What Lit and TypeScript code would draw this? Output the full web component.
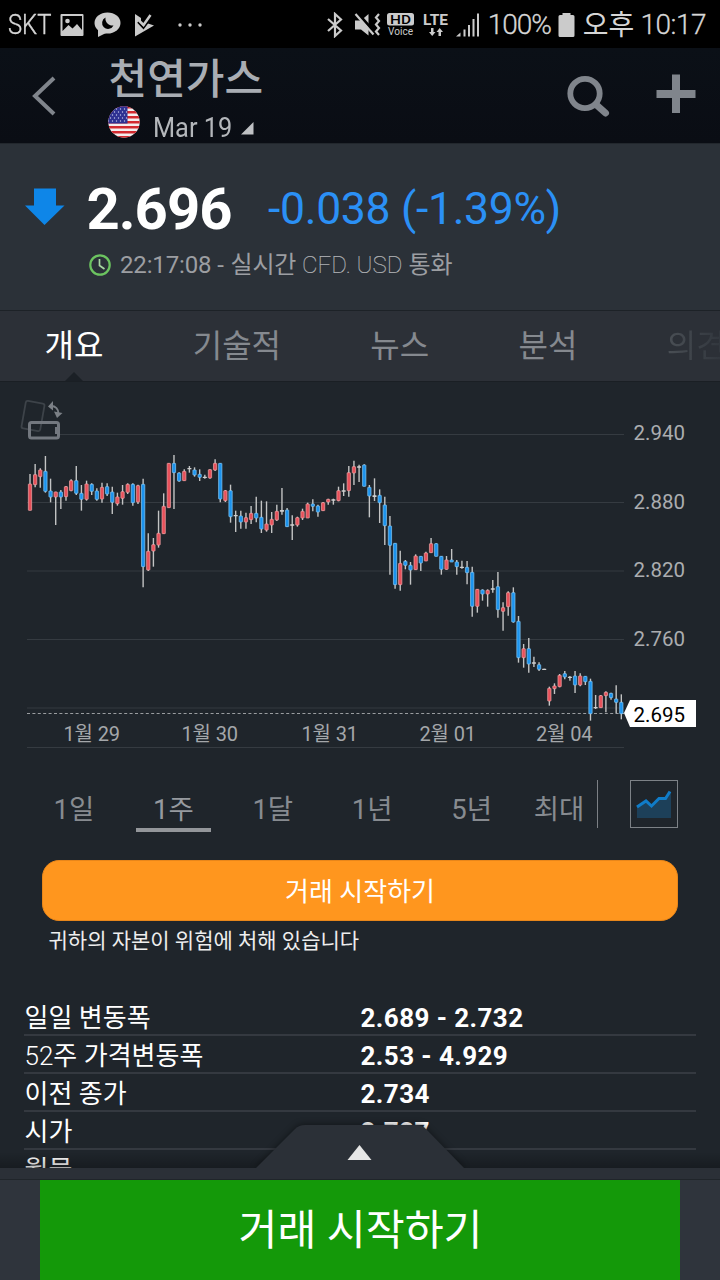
import { LitElement, html, svg, css } from "lit";
import { customElement } from "lit/decorators.js";

/* Candle: kind (r = up, b = down, d = doji), wick top, body top, body bottom, wick bottom.
   Values are thirds of a pixel, measured from the base of their segment. */
const SEGMENTS: { base: number; rows: string }[] = [
  {
    base: 8,
    rows: `r 252 282 361 361|r 222 254 284 292|r 235 240 260 293|b 198 244 304 308|b 266 303 321 337|r 305 306 321 405|b 300 306 321 357|r 288 290 320 332|r 268 272 302 304|b 228 272 310 315|b 285 310 328 362|r 272 282 328 332|b 280 283 304 315|b 295 303 328 332|r 278 292 327 338|b 280 290 312 318|b 290 306 337 372|r 308 321 341 347|r 285 305 325 344|r 280 283 307 312|b 280 283 338 347|r 284 287 336 342|b 266 283 530 592|r 430 484 540 543|r 444 464 483 530|r 362 430 465 473|r 310 349 431 431|r 220 220 353 353|b 195 220 248 357|b 247 249 273 275|r 238 244 272 272|d 228 234 238 248|b 232 240 255 260|b 238 253 262 273|d 254 260 264 266|r 238 239 264 266`,
  },
  {
    base: 58,
    rows: `r 58 70 90 93|b 70 70 177 187|r 150 152 182 186|b 134 152 230 248|d 212 225 228 276|b 212 228 246 266|r 218 233 246 266|r 198 220 239 252|b 170 220 234 247|b 182 232 267 279|r 184 252 270 275|r 216 238 255 279|r 194 214 240 243|d 144 210 215 224|b 204 210 260 260|d 226 253 257 300|r 230 233 255 260|r 206 214 234 240|r 188 192 234 234|b 178 192 199 214|b 194 198 216 230|r 186 188 212 212|r 176 178 186 194|d 176 178 181 194|r 140 152 182 184|d 130 151 154 168|r 78 98 152 170|r 62 80 99 135|d 74 79 82 126|b 73 75 139 139|b 135 142 168 232|d 115 166 171 183|b 148 166 188 249|b 170 195 257 315|b 228 258 316 404|b 310 310 434 446|r 332 370 434 452|b 360 364 376 388|b 366 376 390 434|r 343 348 389 389|b 348 349 369 393|r 335 339 363 363|r 294 311 338 338|b 310 311 349 349|b 348 349 388 404|r 348 360 388 389|b 327 360 366 366|b 360 366 380 404|d 362 380 384 386|b 363 382 398 433|b 380 397 499 530|r 447 448 499 518|b 448 450 462 482|r 448 451 462 500|d 420 445 449 458`,
  },
  {
    base: 148,
    rows: `b 126 170 239 263|r 217 233 244 302|r 184 188 230 257|b 172 188 276 278|b 258 274 383 398|r 342 356 383 413|b 324 356 402 428|d 380 397 401 411|b 397 404 418 423|d 416 416 419 419|r 470 475 513 527|r 460 468 476 492|r 432 436 470 472|b 423 431 441 448|d 438 440 444 452|b 423 438 465 489|r 430 438 465 469|b 438 439 455 465|b 446 454 551 572|d 495 531 535 537|r 495 497 533 533|r 484 487 497 547|b 488 490 503 509|b 466 507 517 550|b 493 517 551 568`,
  },
];

const CANDLES = SEGMENTS.flatMap(({ base, rows }) =>
  rows.split("|").map((row) => {
    const [kind, ...v] = row.split(" ");
    const [high, top, bottom, low] = v.map((n) => base + Number(n) / 3);
    return { kind, high, top, bottom, low };
  }),
);

const FIRST_X = 30;
const STEP = 5.142;

@customElement("price-chart")
export class PriceChart extends LitElement {
  static styles = css`
    :host { display: block; height: 374px; }
    svg { display: block; }
    .grid { stroke: #353b41; stroke-width: 1; }
    .last { stroke: #9a9da0; stroke-width: 1; stroke-dasharray: 3 2.4; }
    .wick { stroke: #c3c4c4; stroke-width: 1.4; }
    .r { fill: #e8505a; stroke: #f0a5a6; stroke-width: 0.7; }
    .b { fill: #1b93ee; stroke: #85c9f5; stroke-width: 0.7; }
    .d { fill: #cfcfcf; }
    .axis { fill: #abadb0; font: 20.5px Roboto, "Noto Sans CJK KR", sans-serif; }
    .day { fill: #a4a7aa; font: 20px Roboto, "Noto Sans CJK KR", sans-serif; }
    .tag { fill: #fff; }
    .tagtext { fill: #000; font: 20.5px Roboto, sans-serif; }
    .phone { fill: none; stroke: #73787f; stroke-width: 3; }
    .ghost { fill: none; stroke: #3d4349; stroke-width: 1.8; }
    .turn { fill: none; stroke: #7b8086; stroke-width: 2; }
    .tip { fill: #7b8086; }
  `;

  render() {
    return html`<svg width="720" height="374" viewBox="0 0 720 374">
      ${[52.5, 120.5, 189, 257.5, 326].map((y, i) => svg`
        <line class="grid" x1=${i === 0 ? 60 : 27} x2="624" y1=${y} y2=${y}></line>`)}
      <line class="grid" x1="27" x2="624" y1="365.5" y2="365.5"></line>
      <line class="last" x1="27" x2="624" y1="331.5" y2="331.5"></line>
      ${CANDLES.map((c, i) => {
        const x = FIRST_X + i * STEP;
        const w = c.kind === "d" ? 4.2 : 3.3;
        return svg`
          <line class="wick" x1=${x} x2=${x} y1=${c.high} y2=${c.low}></line>
          <rect class=${c.kind} x=${x - w / 2} y=${c.top} width=${w} rx="0.4"
            height=${Math.max(1.3, c.bottom - c.top)}></rect>`;
      })}
      ${["2.940", "2.880", "2.820", "2.760"].map((t, i) => svg`
        <text class="axis" x="633.5" y=${58.3 + i * 68.5}>${t}</text>`)}
      ${[["1월 29", 63.5], ["1월 30", 181.500], ["1월 31", 301.500], ["2월 01", 419.500], ["2월 04", 536]].map(
        ([t, x]) => svg`<text class="day" x=${x} y="358.6" textLength="56.500">${t}</text>`)}
      <path class="tag" d="M624 331 L630 318 H696 V345 H630 Z"></path>
      <text class="tagtext" x="633.500" y="339.6">2.695</text>
      <rect class="ghost" x="23.500" y="20" width="19" height="28" rx="2" transform="rotate(10 33 34)"></rect>
      <rect class="phone" x="29.5" y="40.5" width="29" height="15.5" rx="2"></rect>
      <path class="phone" d="M56.5 45v7"></path>
      <path class="turn" d="M51 24c4.500 0 7.500 3 7.500 8"></path>
      <path class="tip" d="M48 24.500l5-5.500v9.500zM54 29.500l8.500 1.500-5.500 5z"></path>
    </svg>`;
  }
}

@customElement("app-root")
export class AppRoot extends LitElement {
  static styles = css`
    :host {
      display: flex; flex-direction: column; position: relative;
      width: 720px; height: 1280px; overflow: hidden;
      background: #1f252b; color: #fff; white-space: nowrap;
      font-family: Roboto, "Noto Sans CJK KR", sans-serif;
    }
    svg { display: block; flex: none; }
    .status {
      flex: none; height: 48px; background: #000; color: #d6d6d6;
      display: flex; align-items: center; justify-content: space-between;
      padding: 2px 14px 0 8px; box-sizing: border-box;
      font-size: 28px; font-weight: 300; line-height: 46px;
    }
    .status .left, .status .right { display: flex; align-items: center; }
    .carrier { width: 52px; }
    .carrier span { display: inline-block; font-size: 28px; font-weight: 300; transform: scaleX(0.85); transform-origin: 0 50%; -webkit-text-stroke: 0.4px #d6d6d6; }
    .pct { width: 63px; margin-left: 8px; letter-spacing: -1px; -webkit-text-stroke: 0.3px #d6d6d6; }
    .clock { margin-left: 8px; letter-spacing: -0.5px; -webkit-text-stroke: 0.3px #d6d6d6; }
    .ampm { font-weight: 400; font-size: 28px; letter-spacing: 0; position: relative; top: 1px; -webkit-text-stroke: 0; }
    .header {
      flex: none; height: 96px; box-sizing: border-box; display: flex;
      background: linear-gradient(#0b1017, #0a0d14); border-bottom: 1px solid #22272d;
      color: #a9adb3;
    }
    .back { width: 108px; }
    .heading { flex: 1; }
    .title { font-size: 42px; font-weight: 500; line-height: 48px; padding: 8px 0 0 0.500px; height: 47px; }
    .contract { display: flex; align-items: center; height: 32px; margin-top: 3px; }
    .month { font-size: 28px; line-height: 32px; margin: 9px 0 0 13px; width: 79px; height: 30px; color: #b4b7bb; }
    .month span { display: inline-block; transform: scaleX(0.905); transform-origin: 0 50%; }
    .contract .corner { margin: 13px 0 0 9px; }
    .quote {
      flex: none; height: 167px; box-sizing: border-box; background: #2b3138;
      border-bottom: 1px solid #1d2227; padding: 32px 0 0 25px;
    }
    .figures { display: flex; height: 68px; }
    .figures .down { margin-top: 12px; }
    .price { font-size: 58px; font-weight: 700; line-height: 66px; width: 181.500px; margin-left: 21.500px; letter-spacing: -1px; }
    .change { font-size: 44.5px; line-height: 67px; color: #2b90f5; letter-spacing: -0.3px; }
    .stamp { display: flex; align-items: center; padding-left: 64px; margin-top: 5px; height: 32px;
      font-size: 24px; line-height: 32px; color: #9c9ea2; }
    .stamp .text { margin-left: 9px; height: 32px; }
    .stamp .time { letter-spacing: -0.15px; }
    .stamp .kr { margin-left: 1px; letter-spacing: -0.3px; }
    .lt { font-weight: 300; }
    .thin { font-weight: 100; color: #b0b2b5; -webkit-text-stroke: 0.2px #b0b2b5; }
    .tabs {
      flex: none; height: 71px; box-sizing: border-box; position: relative; display: flex; gap: 89.300px;
      padding-left: 44.500px; overflow: hidden; font-size: 32px; line-height: 71px;
      background: #2c3037; border-bottom: 1px solid #1a1f24; color: #85898f;
    }
    .tab { flex: none; }
    .active { color: #fff; }
    .far { color: transparent; background: linear-gradient(90deg, #4a4f55, #32373e 52px); -webkit-background-clip: text; background-clip: text; }
    .notch { position: absolute; left: 65px; bottom: 0; }
    .periods { flex: none; display: flex; height: 52px; margin-top: 24px; padding-left: 36.500px; }
    .period {
      width: 75px; margin-right: 24.4px; text-align: center; box-sizing: border-box;
      height: 52px; font-size: 27.5px; line-height: 60px; color: #878b90;
    }
    .period.on { border-bottom: 4px solid #93969a; color: #969a9f; }
    .period.near { margin-right: 12.500px; }
    .period.max { margin-right: 0; border: none; }
    .rule { width: 1px; height: 48px; background: #7c8085; margin: 0 32px 0 0; }
    .cta {
      flex: none; margin: 28px 42px 0; height: 61px; border-radius: 17px; box-sizing: border-box;
      background: #ff961e; border: 1px solid #e8861a; text-align: center; font-size: 26px; line-height: 63px;
    }
    .risk { flex: none; margin: 4px 0 0 48.500px; height: 32px; font-size: 21px; line-height: 32px; color: #eee; }
    .stats { margin: 41px 24px 0; }
    .stat {
      display: grid; grid-template-columns: 336px 1fr; height: 38px; box-sizing: border-box;
      border-bottom: 2px solid #343940; padding: 3px 0 0 0.500px; font-size: 26px; line-height: 34px;
    }
    .stat .val { font-weight: 700; letter-spacing: 0.42px; }
    .dock { position: absolute; left: 0; right: 0; bottom: 0; }
    .handle { display: block; margin: 0 auto -1px; filter: drop-shadow(0 -1px 3px rgba(0, 0, 0, 0.4)); }
    .fade { position: absolute; left: 0; right: 0; bottom: 112px; height: 16px; background: linear-gradient(transparent, rgba(0, 0, 0, 0.25)); }
    .strip { position: relative; background: #2b3037; height: 11px; border-bottom: 1px solid #20252a; }
    .tray { position: relative; background: #2f343c; padding: 0 40px; }
    .trade { background: #149909; height: 100px; text-align: center; font-size: 42.3px; line-height: 101px; padding-left: 1px; }
  `;

  private statusBar() {
    return html`<div class="status">
      <div class="left">
        <span class="carrier"><span>SKT</span></span>
        <svg width="24" height="24" viewBox="0 0 24 24" fill="#cbcbcb">
          <path fill-rule="evenodd" d="M1.500 1h21q1 0 1 1v20q0 1-1 1h-21q-1 0-1-1V2q0-1 1-1zM2.500 3v15l6-6 4 3.500L17 11l5 6V3z"></path>
          <circle cx="7.500" cy="8" r="2.300"></circle>
        </svg>
        <svg width="27" height="26" viewBox="0 0 27 26" style="margin-left:10px">
          <ellipse cx="13.500" cy="11" rx="13" ry="10.500" fill="#cbcbcb"></ellipse>
          <path d="M4 17v8l8-4z" fill="#cbcbcb"></path>
          <path d="M11.500 5.500a6 6 0 1 0 8 8 7 7 0 0 1-8-8z" fill="#000"></path>
        </svg>
        <svg width="21" height="24" viewBox="0 0 21 24" style="margin-left:13px">
          <path d="M1 1l6 4v4l3 3.500 4-2 6 2L1 23.500z" fill="#cbcbcb"></path>
          <path d="M4 9l5.500 6L17 5" fill="none" stroke="#000" stroke-width="2"></path>
          <path d="M5 7.500l4.500 4.500 7-10" fill="none" stroke="#cbcbcb" stroke-width="2.500"></path>
        </svg>
        <svg width="26" height="4" viewBox="0 0 26 4" fill="#cbcbcb" style="margin-left:22px">
          <circle cx="3" cy="2" r="1.700"></circle><circle cx="13" cy="2" r="1.700"></circle><circle cx="23" cy="2" r="1.700"></circle>
        </svg>
      </div>
      <div class="right">
        <svg width="16" height="26" viewBox="0 0 16 26" fill="none" stroke="#cbcbcb" stroke-width="2.200">
          <path d="M1 7l13 11.500-6 5.500V2l6 5.500L1 19"></path>
        </svg>
        <svg width="27" height="26" viewBox="0 0 27 26" style="margin-left:11px">
          <path d="M1 8.500h6L14.500 2v21.500L7 17.500H1z" fill="#cbcbcb"></path>
          <path d="M3 .5l20 22.500" stroke="#000" stroke-width="3"></path>
          <path d="M1.500 2l18 20.500" stroke="#cbcbcb" stroke-width="2.200"></path>
          <path d="M25 2l-3 3.500 3 3.500-3 3.500 3 3.500-3 3.500 3 3.500" fill="none" stroke="#cbcbcb" stroke-width="2.200"></path>
        </svg>
        <svg width="27" height="24" viewBox="0 0 27 24" style="margin-left:6px">
          <rect x="0" y="0" width="27" height="12.500" rx="2.500" fill="#cbcbcb"></rect>
          <text x="3" y="10.600" font-size="12" font-weight="500" textLength="21" lengthAdjust="spacingAndGlyphs" fill="#000">HD</text>
          <text x="1" y="22.300" font-size="10.500" font-weight="400" textLength="25" lengthAdjust="spacingAndGlyphs" fill="#cbcbcb">Voice</text>
        </svg>
        <svg width="27" height="27" viewBox="0 -3 27 27" style="margin:-3px 0 0 8px" fill="#cbcbcb">
          <text x="1" y="11.500" font-size="15" font-weight="700" textLength="25" lengthAdjust="spacingAndGlyphs">LTE</text>
          <path d="M9 15h2.500v4h2l-3.300 4-3.200-4h2zM16.500 23v-4h-2l3.200-4 3.300 4h-2v4z"></path>
        </svg>
        <svg width="24" height="24" viewBox="0 0 24 24" style="margin-left:7px" fill="#cbcbcb">
          <path d="M0 23.500l4.500-4v4zM7.500 16.500h2v7h-2zM12 12h2v11.500h-2zM16.500 6h2v17.500h-2zM21 .5h2v23h-2z"></path>
        </svg>
        <span class="pct">100%</span>
        <svg width="17" height="24" viewBox="0 0 17 24" style="margin-left:7px" fill="#cbcbcb">
          <path d="M4.500 0h8v2H15q1.500 0 1.500 1.500v19Q16.500 24 15 24H2Q.5 24 .5 22.500v-19Q.5 2 2 2h2.500z"></path>
        </svg>
        <span class="clock"><span class="ampm">오후</span> 10:17</span>
      </div>
    </div>`;
  }

  private header() {
    return html`<div class="header">
      <svg class="back" width="108" height="95" viewBox="0 0 108 95" fill="none" stroke="#80858c" stroke-width="4">
        <path d="M54 30L35 48l19 18"></path>
      </svg>
      <div class="heading">
        <div class="title">천연가스</div>
        <div class="contract">
          <svg width="32" height="32" viewBox="0 0 32 32">
            <defs><clipPath id="disc"><circle cx="16" cy="16" r="15.700"></circle></clipPath></defs>
            <g clip-path="url(#disc)">
              <rect width="32" height="32" fill="#f3eeee"></rect>
              ${[0, 5, 10, 15, 20, 25, 30].map((y) => svg`<rect y=${y} width="32" height="2.500" fill="#d22a2f"></rect>`)}
              <rect width="19.500" height="17.500" fill="#2e3192"></rect>
              ${[2, 5, 8, 11, 14].map((y, r) => [1, 5, 9, 13, 17].map((x) => svg`
                <circle cx=${x + (r % 2) * 2 - 0.5} cy=${y + 1} r="0.7" fill="#c3c6ea"></circle>`))}
            </g>
          </svg>
          <span class="month"><span>Mar 19</span></span>
          <svg class="corner" width="13" height="13" viewBox="0 0 13 13" fill="#bfc1c4"><path d="M12.500 0v12.500H0z"></path></svg>
        </div>
      </div>
      <svg width="160" height="95" viewBox="560 48 160 95" fill="none" stroke="#80858c">
        <circle cx="585" cy="93.500" r="14.700" stroke-width="5.800"></circle>
        <path d="M596 104.500l9.500 8.500" stroke-width="7" stroke-linecap="round"></path>
        <path d="M656.500 94H695.500M676 74.500v38.500" stroke-width="8"></path>
      </svg>
    </div>`;
  }

  render() {
    const stats = [
      ["", "일일 변동폭", "2.689 - 2.732"],
      ["52", "주 가격변동폭", "2.53 - 4.929"],
      ["", "이전 종가", "2.734"],
      ["", "시가", "2.727"],
      ["", "월물", ""],
    ];
    return html`
      ${this.statusBar()} ${this.header()}
      <div class="quote">
        <div class="figures">
          <svg class="down" width="40" height="38" viewBox="0 0 40 38" fill="#0e86e8"><path d="M9 .5h22v17h8.500L19.500 37 0 17.500h9z"></path></svg>
          <span class="price">2.696</span>
          <span class="change">-0.038 (-1.39%)</span>
        </div>
        <div class="stamp">
          <svg width="22" height="22" viewBox="0 0 22 22" fill="none">
            <circle cx="11" cy="11" r="9.700" stroke="#6cc460" stroke-width="2.200"></circle>
            <path d="M10.500 5v6.500l5 3.500" stroke="#a8d8a2" stroke-width="1.700"></path>
          </svg>
          <span class="text"><span class="time">22:17:08 -</span> <span class="kr">실시간</span> <span class="thin">CFD. USD</span> 통화</span>
        </div>
      </div>
      <div class="tabs">
        <span class="tab active">개요</span><span class="tab">기술적</span><span class="tab">뉴스</span>
        <span class="tab">분석</span><span class="tab far">의견</span>
        <svg class="notch" width="18" height="9" viewBox="0 0 18 9" fill="#1b2026"><path d="M0 9L9 0l9 9z"></path></svg>
      </div>
      <price-chart></price-chart>
      <div class="periods">
        <span class="period">1일</span><span class="period on">1주</span><span class="period">1달</span>
        <span class="period">1년</span><span class="period near">5년</span><span class="period max">최대</span>
        <span class="rule"></span>
        <svg width="48" height="48" viewBox="0 0 48 48">
          <rect x=".5" y=".5" width="47" height="47" fill="none" stroke="#7d8287"></rect>
          <path d="M7 27l9-6 5.500 5L29 18.500h6.500L41 11v27H7z" fill="#1d4059"></path>
          <path d="M7 27l9-6 5.500 5L29 18.500h6.500L40 11.500" fill="none" stroke="#107cc8" stroke-width="3"></path>
        </svg>
      </div>
      <div class="cta">거래 시작하기</div>
      <div class="risk">귀하의 자본이 위험에 처해 있습니다</div>
      <div class="stats">
        ${stats.map(([num, name, value]) => html`<div class="stat"><span><span class="lt">${num}</span>${name}</span><span class="val">${value}</span></div>`)}
      </div>
      <div class="dock">
        <div class="fade"></div>
        <svg class="handle" width="210" height="44" viewBox="0 0 210 44">
          <path d="M0 44L40 4Q44 0 50 0H162Q167 0 171 4L210 44z" fill="#2b3037"></path>
          <path d="M104.500 20l12 15h-24z" fill="#e6e6e6"></path>
        </svg>
        <div class="strip"></div>
        <div class="tray"><div class="trade">거래 시작하기</div></div>
      </div>`;
  }
}
